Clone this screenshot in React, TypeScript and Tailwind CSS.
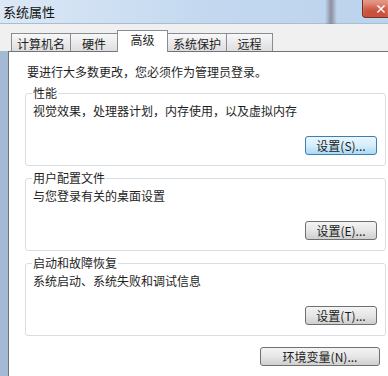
const tabs = [
  { label: '计算机名', w: 'w-[60px]' },
  { label: '硬件', w: 'w-[48px]' },
  { label: '高级', w: 'w-[51px]', active: true },
  { label: '系统保护', w: 'w-[60px]' },
  { label: '远程', w: 'w-[47px]' },
];

const groups = [
  { title: '性能', desc: '视觉效果，处理器计划，内存使用，以及虚拟内存', btn: '设置(S)...', focused: true },
  { title: '用户配置文件', desc: '与您登录有关的桌面设置', btn: '设置(E)...' },
  { title: '启动和故障恢复', desc: '系统启动、系统失败和调试信息', btn: '设置(T)...' },
];

function WinButton({ label, focused, className }: { label: string; focused?: boolean; className?: string }) {
  return (
    <button
      type="button"
      className={
        'flex h-[19px] items-center justify-center rounded-[3px] border text-[12px] leading-none text-[#1b1b1b] ' +
        (focused
          ? 'border-[#3c7fb1] bg-[#cdeafb] bg-linear-to-b from-[#eaf6fd] via-[#d6eefb] to-[#a9daf5]'
          : 'border-[#707070] bg-[#e2e2e2] bg-linear-to-b from-[#f4f4f4] via-[#e6e6e6] to-[#cfcfcf]') +
        ' ' +
        (className ?? '')
      }
    >
      {label}
    </button>
  );
}

export default function App() {
  return (
    <div className="relative h-[376px] w-[388px] overflow-hidden bg-[#f0f0f0] font-[family-name:Noto_Sans_CJK_SC,sans-serif] text-[#1e1e1e]">
      {/* title bar */}
      <div className="relative flex h-[24px] border-b border-[#a9bdd3] bg-[#c8dcf1] bg-linear-to-r from-[#dce8f5] via-[#c4d9f0] to-[#bcd3ed]">
        <span className="pl-[3px] pt-[5px] text-[13px] leading-none text-[#111]">系统属性</span>
        <div className="absolute left-[325px] top-0 h-[24px] w-[12px] bg-linear-to-r from-transparent via-[#77707f] to-transparent opacity-70" />
        {/* close button, cut off by the right edge */}
        <div className="absolute right-0 top-0 z-20 flex h-[18px] w-[26px] items-center justify-end rounded-bl-[4px] border-b border-l border-[#7a3025] bg-[#c9503a] shadow-[inset_0_8px_6px_-2px_#e59a88]">
          <span className="pr-[1px] text-[12px] font-bold leading-none text-white">×</span>
        </div>
      </div>

      {/* tabs */}
      <div className="flex h-[27px] items-end pl-[11px]">
        {tabs.map((t, i) =>
          t.active ? (
            <div
              key={t.label}
              className={`relative z-10 -mb-px -ml-px h-[22px] ${t.w} border border-b-0 border-[#898c95] bg-white text-center text-[12px] leading-[18px]`}
            >
              {t.label}
            </div>
          ) : (
            <div
              key={t.label}
              className={`h-[18px] ${t.w} ${i > 0 ? '-ml-px' : ''} border border-b-0 border-[#898c95] bg-[#e8e8e8] bg-linear-to-b from-[#f8f8f8] to-[#dedede] pt-[2px] text-center text-[12px] leading-[16px]`}
            >
              {t.label}
            </div>
          ),
        )}
      </div>

      {/* frame strip + panel */}
      <div className="flex h-[325px] border-l-[8px] border-[#a3b9d4]">
        <div className="flex-1 border-l border-t border-[#6f737b] bg-white">
          <p className="pl-[18px] pt-[12px] text-[12px] leading-[16px]">要进行大多数更改，您必须作为管理员登录。</p>

          <div className="ml-[16px] mt-[13px] flex w-[361px] flex-col gap-[12px]">
            {groups.map((g) => (
              <div key={g.title} className="relative flex h-[73px] flex-col rounded-[3px] border border-[#d5dfe5] pl-[7px] pt-[9px]">
                <span className="absolute -top-[9px] left-[6px] bg-white px-px text-[12px] leading-[16px]">{g.title}</span>
                <p className="text-[12px] leading-[16px]">{g.desc}</p>
                <WinButton label={g.btn} focused={g.focused} className="mr-[8px] mt-[17px] w-[72px] self-end" />
              </div>
            ))}
          </div>

          <div className="mt-[11px] flex justify-end pr-[8px]">
            <WinButton label="环境变量(N)..." className="w-[120px]" />
          </div>
        </div>
      </div>
    </div>
  );
}
